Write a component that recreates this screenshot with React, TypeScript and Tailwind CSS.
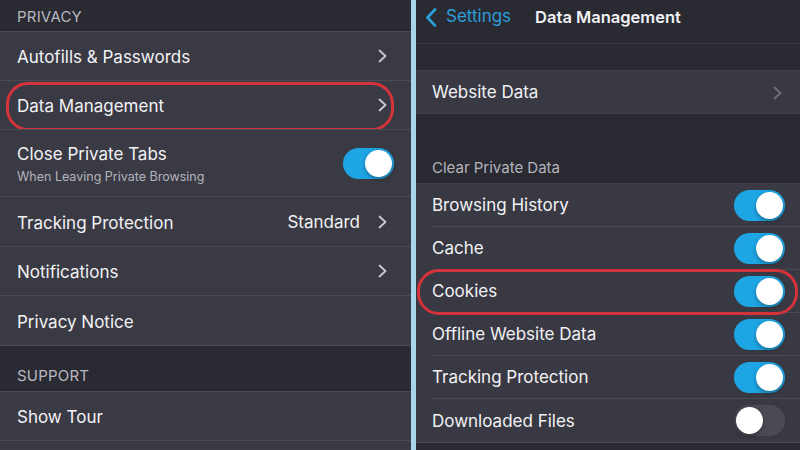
import React from "react";

const font = { fontFamily: "Inter, 'Liberation Sans', sans-serif" };

function Chevron({ dim }: { dim?: boolean }) {
    return (
        <svg width="9" height="14" viewBox="0 0 9 14" className="shrink-0">
            <path d="M1.5 1.5 L7.5 7 L1.5 12.5" fill="none" stroke={dim ? "#6f6f78" : "#c9c9d0"} strokeWidth="1.8" strokeLinecap="round" strokeLinejoin="round" />
        </svg>
    );
}

function Toggle({ on }: { on: boolean }) {
    return (
        <div className={on
            ? "w-[51px] h-[31px] rounded-full bg-[#1ea5e4] p-[2px] flex justify-end shrink-0"
            : "w-[51px] h-[31px] rounded-full bg-[#4a4a53] p-[2px] flex justify-start shrink-0"}>
            <div className="w-[27px] h-[27px] rounded-full bg-white shadow-[0_2px_4px_rgba(0,0,0,0.35)]" />
        </div>
    );
}

function Ring({ className }: { className: string }) {
    return <div className={"pointer-events-none absolute rounded-[22px] border-[3px] border-[#d5333b] " + className} />;
}

const leftRows = [
    { title: "Autofills & Passwords", chevron: true, h: "h-[49px]" },
    { title: "Data Management", chevron: true, ring: true, h: "h-[49px]" },
    { title: "Close Private Tabs", sub: "When Leaving Private Browsing", toggle: true, h: "h-[67px]" },
    { title: "Tracking Protection", value: "Standard", chevron: true, h: "h-[50px]" },
    { title: "Notifications", chevron: true, h: "h-[49px]" },
    { title: "Privacy Notice", h: "h-[50px]" },
];

const clearRows = [
    { title: "Browsing History", on: true },
    { title: "Cache", on: true },
    { title: "Cookies", on: true, ring: true },
    { title: "Offline Website Data", on: true },
    { title: "Tracking Protection", on: true },
    { title: "Downloaded Files", on: false },
];

export default function App() {
    return (
        <div className="w-[800px] h-[450px] overflow-hidden flex bg-[#2a2a32] text-[#f2f2f5]" style={font}>
            {/* left: settings list */}
            <div className="w-[411px] shrink-0 flex flex-col">
                <div className="h-[31px] flex items-end pb-[3px] px-[17px] text-[15px] text-[#b8b8c0] tracking-[0.2px] bg-[#2a2a32]">PRIVACY</div>
                {leftRows.map((row, i) => (
                    <div key={i} className={
                        "relative flex items-center pl-[17px] bg-[#3a3a44] border-t border-[#4a4a53] " + row.h + (row.sub ? " pr-[17px]" : " pr-[24px]")
                    }>
                        <div className="flex-1 flex flex-col pt-[2px]">
                            <span className="text-[17px] leading-[22px]">{row.title}</span>
                            {row.sub && <span className="text-[12.5px] leading-[18px] text-[#b4b4bc] mt-[3px]">{row.sub}</span>}
                        </div>
                        {row.value && <span className="text-[17px] mr-[18px] pt-[2px]">{row.value}</span>}
                        {row.chevron && <Chevron />}
                        {row.toggle && <Toggle on />}
                        {row.ring && <Ring className="left-[6px] right-[17px] top-[1px] -bottom-[2px]" />}
                    </div>
                ))}
                <div className="h-[46px] flex items-end pb-[4px] px-[17px] text-[15px] text-[#b8b8c0] tracking-[0.2px] bg-[#2a2a32] border-t border-[#4a4a53]">SUPPORT</div>
                <div className="h-[49px] flex items-center pt-[3px] px-[17px] bg-[#3a3a44] border-t border-[#4a4a53]">
                    <span className="text-[17px]">Show Tour</span>
                </div>
                <div className="flex-1 bg-[#3a3a44] border-t border-[#4a4a53]" />
            </div>

            {/* split divider */}
            <div className="w-[5px] shrink-0 bg-[#a8d5ea]" />

            {/* right: data management */}
            <div className="flex-1 flex flex-col bg-[#2a2a32]">
                <div className="h-[44px] grid grid-cols-[1fr_auto_1fr] items-center pb-[9px] border-b border-[#393941]">
                    <div className="flex items-center pl-[9px] gap-[9px] text-[#2a9fda]">
                        <svg width="12" height="19" viewBox="0 0 12 19">
                            <path d="M10 1.5 L2.5 9.5 L10 17.5" fill="none" stroke="#2a9fda" strokeWidth="2.6" strokeLinecap="round" strokeLinejoin="round" />
                        </svg>
                        <span className="text-[17px]">Settings</span>
                    </div>
                    <span className="text-[16.5px] font-semibold">Data Management</span>
                    <div />
                </div>
                <div className="h-[26px]" />
                <div className="h-[44px] flex items-center pt-[2px] pl-[16px] pr-[18px] bg-[#393943] border-y border-[#40404a]">
                    <span className="flex-1 text-[17px]">Website Data</span>
                    <Chevron dim />
                </div>
                <div className="h-[69px] flex items-end pb-[4px] pl-[16px] text-[15px] text-[#b4b4bc]">Clear Private Data</div>
                <div className="bg-[#393943] border-t border-[#40404a]">
                    {clearRows.map((row, i) => (
                        <div key={i} className="relative h-[43px] flex items-center pl-[16px]">
                            <div className={i < clearRows.length - 1
                                ? "flex-1 h-full flex items-center pr-[15px] border-b border-[#4a4a53]"
                                : "flex-1 h-full flex items-center pr-[15px]"}>
                                <span className="flex-1 text-[17px] pt-[2px]">{row.title}</span>
                                <Toggle on={row.on} />
                            </div>
                            {row.ring && <Ring className="left-[1px] right-[2px] -top-[1px] -bottom-[2px]" />}
                        </div>
                    ))}
                </div>
                <div className="flex-1 border-t border-[#4a4a53]" />
            </div>
        </div>
    );
}
